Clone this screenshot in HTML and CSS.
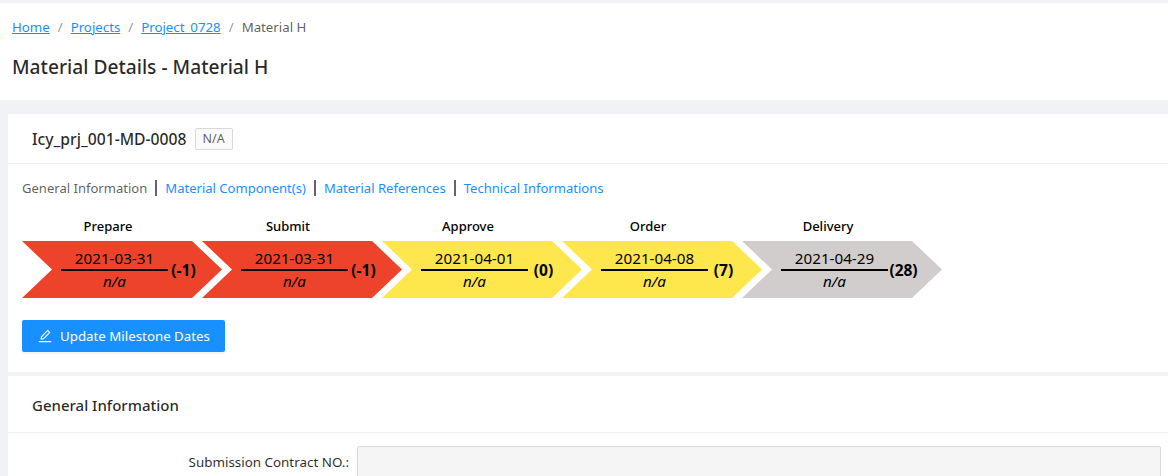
FILE: index.html
```html
<!DOCTYPE html>
<html lang="en">
<head>
<meta charset="utf-8">
<title>Material Details - Material H</title>
<link rel="stylesheet" href="styles.css">
</head>
<body>
<header class="page-header">
  <nav class="breadcrumb">
    <a href="#">Home</a><span class="sep">/</span>
    <a href="#">Projects</a><span class="sep">/</span>
    <a href="#">Project_0728</a><span class="sep">/</span>
    <span class="current">Material H</span>
  </nav>
  <h1 class="page-title">Material Details - Material H</h1>
</header>
<main class="content">
  <section class="card card-top">
    <div class="card-head">
      <h2 class="code">Icy_prj_001-MD-0008</h2>
      <span class="tag">N/A</span>
    </div>
    <div class="card-body">
      <div class="tabs">
        <span class="tab tab-active">General Information</span>
        <a class="tab" href="#">Material Component(s)</a>
        <a class="tab" href="#">Material References</a>
        <a class="tab" href="#">Technical Informations</a>
      </div>
      <div class="timeline">
        <div class="step">
          <div class="step-label">Prepare</div>
          <div class="chevron red">
            <div class="fraction"><span class="date">2021-03-31</span><em class="actual">n/a</em></div>
            <b class="diff">(-1)</b>
          </div>
        </div>
        <div class="step">
          <div class="step-label">Submit</div>
          <div class="chevron red">
            <div class="fraction"><span class="date">2021-03-31</span><em class="actual">n/a</em></div>
            <b class="diff">(-1)</b>
          </div>
        </div>
        <div class="step">
          <div class="step-label">Approve</div>
          <div class="chevron yellow">
            <div class="fraction"><span class="date">2021-04-01</span><em class="actual">n/a</em></div>
            <b class="diff">(0)</b>
          </div>
        </div>
        <div class="step">
          <div class="step-label">Order</div>
          <div class="chevron yellow">
            <div class="fraction"><span class="date">2021-04-08</span><em class="actual">n/a</em></div>
            <b class="diff">(7)</b>
          </div>
        </div>
        <div class="step">
          <div class="step-label">Delivery</div>
          <div class="chevron grey">
            <div class="fraction"><span class="date">2021-04-29</span><em class="actual">n/a</em></div>
            <b class="diff">(28)</b>
          </div>
        </div>
      </div>
      <button class="btn" type="button">
        <svg class="btn-icon" viewBox="64 64 896 896" width="14" height="14" fill="currentColor" aria-hidden="true"><path d="M257.7 752c2 0 4-.2 6-.5L431.9 722c2-.4 3.9-1.3 5.3-2.8l423.9-423.9a9.96 9.96 0 0 0 0-14.1L694.9 114.9c-1.9-1.9-4.4-2.9-7.1-2.9s-5.2 1-7.1 2.9L256.8 538.8c-1.5 1.5-2.4 3.3-2.8 5.3l-29.5 168.2a33.5 33.5 0 0 0 9.4 29.8c6.6 6.4 14.9 9.9 23.8 9.9zm67.4-174.4L687.8 215l73.3 73.3-362.7 362.6-88.9 15.7 15.6-89zM880 836H144c-17.7 0-32 14.3-32 32v36c0 4.4 3.6 8 8 8h784c4.4 0 8-3.6 8-8v-36c0-17.7-14.3-32-32-32z"/></svg>
        <span>Update Milestone Dates</span>
      </button>
    </div>
  </section>
  <section class="card">
    <div class="card-head card-head-tall">
      <h2 class="section-title">General Information</h2>
    </div>
    <div class="form-row">
      <label class="form-label">Submission Contract NO.:</label>
      <input class="form-input" type="text" disabled>
    </div>
  </section>
</main>
</body>
</html>
```
FILE: styles.css
```css
* { box-sizing: border-box; }
html, body { margin: 0; height: 476px; overflow: hidden; }
body {
  background: #f0f2f5;
  padding-top: 3px;
  font-family: "Noto Sans", "Open Sans", sans-serif;
  font-size: 13px;
  color: rgba(0, 0, 0, 0.65);
}
a { color: #1890ff; }
.page-header { background: #fff; height: 97px; padding: 14px 12px 0; }
.breadcrumb { display: flex; height: 20px; align-items: center; font-size: 13.25px; }
.sep { margin: 0 8px; color: rgba(0, 0, 0, 0.45); }
.current { color: rgba(0, 0, 0, 0.65); }
.page-title { margin: 18px 0 0; font-size: 19.2px; line-height: 24px; font-weight: 500; color: rgba(0, 0, 0, 0.85); }
.content { padding: 14px 0 0 8px; display: flex; flex-direction: column; gap: 4px; }
.card { background: #fff; }
.card-top { height: 258px; }
.card-head { display: flex; align-items: center; height: 50px; padding: 0 24px; border-bottom: 1px solid #f0f0f0; }
.card-head-tall { height: 57px; padding-top: 2px; }
.code { margin: 0; font-size: 15.7px; font-weight: 500; color: rgba(0, 0, 0, 0.85); }
.tag { margin-left: 8px; height: 22px; padding: 0 7px; display: flex; align-items: center; font-size: 12.5px; background: #fafafa; border: 1px solid #d9d9d9; border-radius: 2px; }
.card-body { padding: 15px 14px 0; }
.tabs { display: flex; height: 18px; align-items: center; font-size: 13.05px; }
.tab { text-decoration: none; padding-right: 8px; margin-right: 8px; border-right: 2px solid #666; line-height: 16px; }
.tab:last-child { border-right: 0; }
.timeline { display: flex; margin-top: 20px; }
.step { width: 180px; }
.step-label { width: 172px; text-align: center; height: 24px; font-size: 13px; font-weight: 500; color: #000; line-height: 18px; }
.chevron {
  width: 200px;
  height: 57px;
  display: flex;
  align-items: center;
  padding-left: 39px;
  color: #000;
  clip-path: polygon(0 0, 170px 0, 200px 50%, 170px 100%, 0 100%, 30px 50%);
}
.red { background: #ee432b; }
.yellow { background: #fde74c; }
.grey { background: #d1cdcd; }
.fraction { width: 107px; display: flex; flex-direction: column; align-items: center; padding-top: 1px; }
.date { font-size: 15.2px; line-height: 21px; border-bottom: 2px solid #000; width: 100%; text-align: center; }
.actual { font-size: 15.2px; line-height: 21px; }
.diff { width: 31px; text-align: center; font-size: 15.5px; flex: none; }
.btn {
  display: flex;
  align-items: center;
  gap: 8px;
  margin-top: 22px;
  height: 32px;
  width: 203px;
  padding: 0 0 0 16px;
  border: 0;
  border-radius: 2px;
  background: #1890ff;
  color: #fff;
  font: inherit;
  font-size: 13.3px;
  white-space: nowrap;
  box-shadow: 0 2px 0 rgba(0, 0, 0, 0.045);
}
.btn-icon { flex: none; }
.section-title { margin: 0; font-size: 15px; font-weight: 500; color: rgba(0, 0, 0, 0.85); }
.form-row { display: flex; padding-top: 13px; }
.form-label { width: 341px; text-align: right; font-size: 13.4px; line-height: 32px; height: 32px; color: rgba(0, 0, 0, 0.85); }
.form-input { margin-left: 8px; width: 804px; height: 32px; background: #f5f5f5; border: 1px solid #d9d9d9; border-radius: 2px; }
```
